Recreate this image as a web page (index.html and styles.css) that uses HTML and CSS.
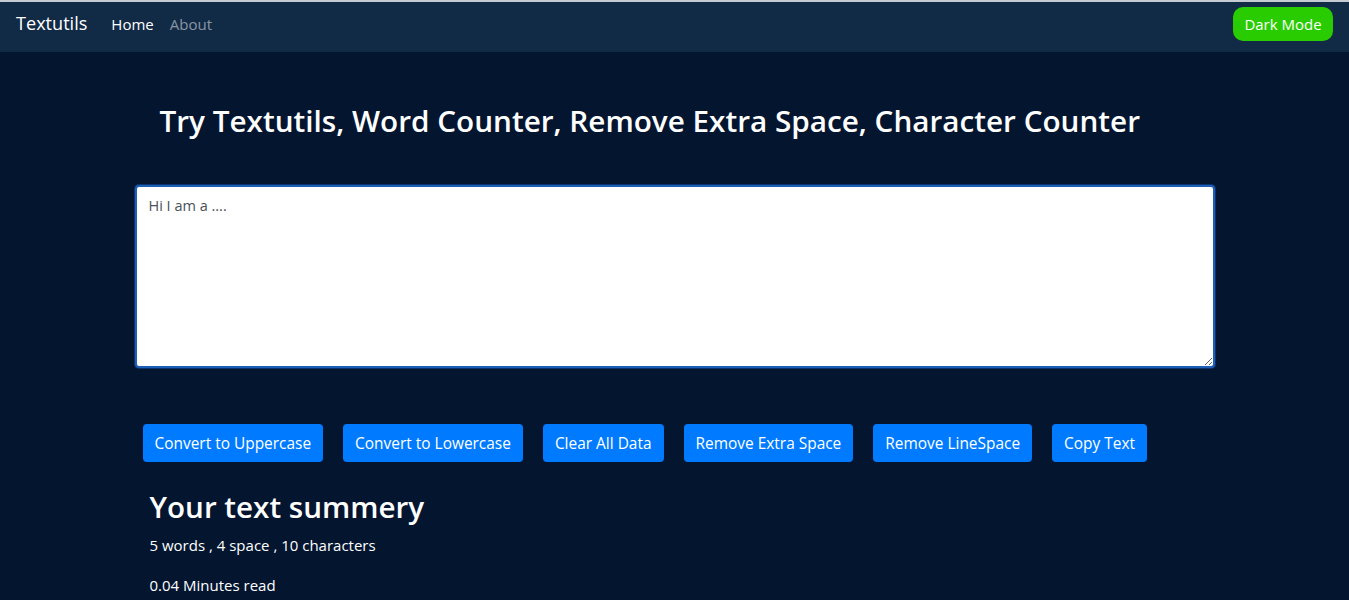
FILE: index.html
```html
<!DOCTYPE html>
<html lang="en">
<head>
<meta charset="utf-8">
<title>Textutils</title>
<link rel="stylesheet" href="styles.css">
</head>
<body>
<nav class="navbar">
  <div class="nav-left">
    <a class="brand" href="#">Textutils</a>
    <ul class="nav-links">
      <li><a class="nav-link active" href="#">Home</a></li>
      <li><a class="nav-link" href="#">About</a></li>
    </ul>
  </div>
  <button class="mode-btn">Dark Mode</button>
</nav>
<main class="container">
  <h1 class="title">Try Textutils, Word Counter, Remove Extra Space, Character Counter</h1>
  <textarea class="text-box" rows="7">Hi I am a ....</textarea>
  <div class="actions">
    <button class="btn">Convert to Uppercase</button>
    <button class="btn">Convert to Lowercase</button>
    <button class="btn">Clear All Data</button>
    <button class="btn">Remove Extra Space</button>
    <button class="btn">Remove LineSpace</button>
    <button class="btn">Copy Text</button>
  </div>
  <section class="summary">
    <h2 class="summary-title">Your text summery</h2>
    <p class="summary-line">5 words , 4 space , 10 characters</p>
    <p class="summary-line">0.04 Minutes read</p>
  </section>
</main>
</body>
</html>
```

FILE: styles.css
```css
* { box-sizing: border-box; }
html, body { margin: 0; padding: 0; }
body {
  background: #03152f;
  color: #ffffff;
  font-family: "Open Sans", "Noto Sans", sans-serif;
  font-size: 16px;
  line-height: 1.5;
  overflow: hidden;
}
.navbar {
  display: flex;
  align-items: center;
  justify-content: space-between;
  height: 52px;
  padding: 5px 16px 11px;
  background: #112a46;
  border-top: 2px solid #c5cbd3;
}
.nav-left { display: flex; align-items: center; }
.brand {
  color: #fff;
  text-decoration: none;
  font-size: 18.1px;
  margin-right: 16px;
}
.nav-links { display: flex; list-style: none; margin: 0; padding: 0; }
.nav-link {
  display: block;
  padding: 8px 8px;
  font-size: 15px;
  color: rgba(255,255,255,0.5);
  text-decoration: none;
}
.nav-link.active { color: #fff; }
.mode-btn {
  font-family: inherit;
  font-size: 15px;
  color: #fff;
  background: #28cc00;
  border: none;
  border-radius: 10px;
  height: 34px;
  width: 100px;
  padding: 0;
}
.container {
  width: 1080px;
  margin: 0 auto;
  padding-top: 50px;
}
.title {
  margin: 0 0 45px 25px;
  font-size: 29.7px;
  font-weight: 600;
  line-height: 38px;
}
.text-box {
  display: block;
  width: 100%;
  height: 183px;
  padding: 7px 12px 6px;
  font-family: inherit;
  font-size: 14.5px;
  line-height: 24px;
  color: #495057;
  background: #fff;
  border: 2px solid #1d5fb6;
  border-radius: 4px;
  box-shadow: 0 0 0 1px #0a3470;
  outline: none;
  resize: vertical;
}
.actions {
  display: flex;
  gap: 20px;
  padding: 0 8px;
  margin-top: 56px;
}
.btn {
  font-family: inherit;
  font-size: 15.45px;
  color: #fff;
  background: #007bff;
  border: none;
  border-radius: 4px;
  height: 38px;
  padding: 0 12px;
}
.summary {
  padding: 0 15px;
  margin-top: 26px;
}
.summary-title {
  margin: 0 0 7px;
  font-size: 29.6px;
  font-weight: 600;
  line-height: 38px;
}
.summary-line {
  margin: 0 0 16px;
  font-size: 15px;
  line-height: 24px;
}
```
